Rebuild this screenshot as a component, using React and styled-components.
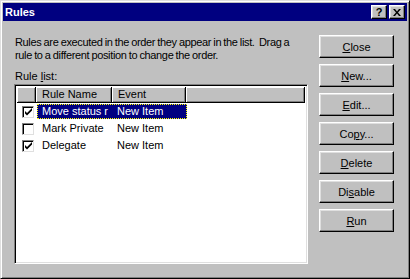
import React from 'react';
import styled, { createGlobalStyle } from 'styled-components';

const GlobalStyle = createGlobalStyle`
  html, body { margin: 0; padding: 0; background: #c0c0c0; }
  body { font-family: "Liberation Sans", Arial, sans-serif; font-size: 11px; color: #000; }
`;

const Window = styled.div`
  box-sizing: border-box;
  width: 410px;
  height: 279px;
  background: #c0c0c0;
  border: 1px solid;
  border-color: #dfdfdf #000 #000 #dfdfdf;
  box-shadow: inset 1px 1px #fff, inset -1px -1px #808080;
  padding: 2px;
  display: flex;
  flex-direction: column;
`;

const TitleBar = styled.div`
  height: 18px;
  background: #000080;
  display: flex;
  align-items: center;
  padding: 0 2px 0 2px;
`;

const Title = styled.div`
  flex: 1;
  color: #fff;
  font-weight: bold;
  font-size: 11px;
  line-height: 18px;
`;

const CaptionButton = styled.div`
  box-sizing: border-box;
  width: 16px;
  height: 14px;
  margin-left: ${p => p.$gap || 0}px;
  background: #c0c0c0;
  border: 1px solid;
  border-color: #fff #000 #000 #fff;
  box-shadow: inset -1px -1px #808080, inset 1px 1px #dfdfdf;
  display: flex;
  align-items: center;
  justify-content: center;
  font-weight: bold;
  font-size: 11px;
  line-height: 12px;
`;

const Body = styled.div`
  flex: 1;
  display: flex;
  padding: 0 13px 0 11px;
  gap: 11px;
`;

const LeftCol = styled.div`
  width: 294px;
  padding-top: 15px;
  display: flex;
  flex-direction: column;
`;

const Intro = styled.p`
  margin: 0 0 8px 1px;
  line-height: 13px;
  white-space: pre;
  letter-spacing: -0.35px;
  word-spacing: -0.5px;
`;

const Label = styled.div`
  margin-left: 1px;
  line-height: 13px;
  height: 14px;
`;

const ListBox = styled.div`
  box-sizing: border-box;
  height: 180px;
  background: #fff;
  border: 1px solid;
  border-color: #808080 #fff #fff #808080;
  box-shadow: inset 1px 1px #000, inset -1px -1px #dfdfdf;
  padding: 2px;
  display: flex;
  flex-direction: column;
`;

const HeaderRow = styled.div`
  display: flex;
  height: 16px;
`;

const HeaderCell = styled.div`
  box-sizing: border-box;
  width: ${p => p.$w ? `${p.$w}px` : 'auto'};
  flex: ${p => p.$w ? 'none' : 1};
  height: 16px;
  background: #c0c0c0;
  border-right: 1px solid #000;
  border-bottom: 1px solid #000;
  box-shadow: inset 1px 1px #fff, inset -1px -1px #808080;
  padding-left: 6px;
  line-height: 15px;
  white-space: nowrap;
  overflow: hidden;
`;

const Row = styled.div`
  display: flex;
  height: 17px;
  align-items: center;
`;

const CheckCell = styled.div`
  width: 19px;
  flex: none;
  display: flex;
  align-items: center;
  padding-left: 5px;
  box-sizing: border-box;
`;

const Box = styled.div`
  box-sizing: border-box;
  width: 12px;
  height: 12px;
  border: 1px solid;
  border-color: #808080 #dfdfdf #dfdfdf #808080;
  box-shadow: inset 1px 1px #000;
  background: #fff;
  display: flex;
  align-items: center;
  justify-content: center;
`;

const Selection = styled.div`
  display: flex;
  height: 15px;
  margin-left: 1px;
  background: ${p => p.$selected ? '#000080' : 'transparent'};
  color: ${p => p.$selected ? '#fff' : '#000'};
  outline: ${p => p.$selected ? '1px dotted #ffff00' : 'none'};
  outline-offset: -1px;
`;

const Cell = styled.div`
  box-sizing: border-box;
  width: ${p => p.$w}px;
  padding-left: 5px;
  line-height: 15px;
  white-space: nowrap;
  overflow: hidden;
`;

const ButtonCol = styled.div`
  padding-top: 14px;
  display: flex;
  flex-direction: column;
  gap: 6px;
`;

const Button = styled.button`
  box-sizing: border-box;
  width: 75px;
  height: 23px;
  padding: 0;
  background: #c0c0c0;
  font-family: "Liberation Sans", Arial, sans-serif;
  font-size: 11px;
  color: #000;
  border: 1px solid;
  border-color: #fff #000 #000 #fff;
  box-shadow: inset -1px -1px #808080, inset 1px 1px #dfdfdf;
  u { text-decoration: underline; }
`;

const Check = () => (
  <svg width="8" height="8" viewBox="0 0 8 8" style={{ display: 'block', marginLeft: 1, marginTop: 1 }}>
    <path d="M0 3 L2 5 L7 0 L7 2.5 L2 7.5 L0 5.5 Z" fill="#000" />
  </svg>
);

const rules = [
  { name: 'Move status r', event: 'New Item', on: true, selected: true },
  { name: 'Mark Private', event: 'New Item', on: false },
  { name: 'Delegate', event: 'New Item', on: true },
];

const buttons = [
  ['', 'C', 'lose'],
  ['', 'N', 'ew...'],
  ['', 'E', 'dit...'],
  ['Co', 'p', 'y...'],
  ['', 'D', 'elete'],
  ['Di', 's', 'able'],
  ['', 'R', 'un'],
];

export default function App() {
  return (
    <>
      <GlobalStyle />
      <Window>
        <TitleBar>
          <Title>Rules</Title>
          <CaptionButton>?</CaptionButton>
          <CaptionButton $gap={2}>
            <svg width="8" height="7" viewBox="0 0 8 7">
              <path d="M0 0h2l2 2.5L6 0h2L5 3.5 8 7H6L4 4.5 2 7H0l3-3.5z" fill="#000" />
            </svg>
          </CaptionButton>
        </TitleBar>
        <Body>
          <LeftCol>
            <Intro>{'Rules are executed in the order they appear in the list.  Drag a\nrule to a different position to change the order.'}</Intro>
            <Label>Rule <u>l</u>ist:</Label>
            <ListBox>
              <HeaderRow>
                <HeaderCell $w={19} />
                <HeaderCell $w={76}>Rule Name</HeaderCell>
                <HeaderCell $w={74}>Event</HeaderCell>
                <HeaderCell />
              </HeaderRow>
              {rules.map(r => (
                <Row key={r.name}>
                  <CheckCell>
                    <Box>{r.on && <Check />}</Box>
                  </CheckCell>
                  <Selection $selected={r.selected}>
                    <Cell $w={75}>{r.name}</Cell>
                    <Cell $w={75}>{r.event}</Cell>
                  </Selection>
                </Row>
              ))}
            </ListBox>
          </LeftCol>
          <ButtonCol>
            {buttons.map(([a, k, b]) => (
              <Button key={a + k + b}>{a}<u>{k}</u>{b}</Button>
            ))}
          </ButtonCol>
        </Body>
      </Window>
    </>
  );
}
